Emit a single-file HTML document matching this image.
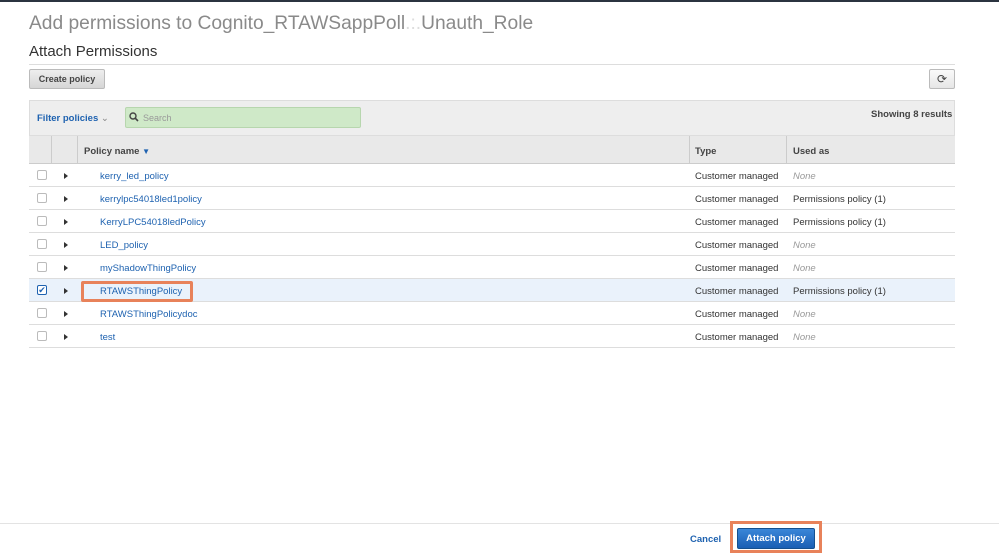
<!DOCTYPE html>
<html><head><style>
*{margin:0;padding:0;box-sizing:border-box}
body{width:999px;height:551px;background:#fff;font-family:"Liberation Sans",sans-serif;position:relative;overflow:hidden;color:#333}
.a{position:absolute}
.row{position:absolute;left:29px;width:926px;height:23px;border-bottom:1px solid #ddd;font-size:9.5px}
.row span{position:absolute;top:7px}
.cb{position:absolute;left:8px;top:6px;width:10px;height:10px;border:1px solid #bbb;border-radius:2px;background:#fff}
.tri{position:absolute;left:35px;top:9px;width:0;height:0;border-left:4px solid #333;border-top:3px solid transparent;border-bottom:3px solid transparent}
.nm{left:71px;color:#1e62b0}
.ty{left:666px}
.us{left:764px}
.none{color:#999;font-style:italic}
</style></head><body>
<div class="a" style="left:0;top:0;width:999px;height:2px;background:#2b3440"></div>
<div class="a" style="left:29px;top:13px;font-size:19.2px;color:#8a8a8a;white-space:nowrap">Add permissions to Cognito_RTAWSappPoll<span style="color:#ddd">.:.</span>Unauth_Role</div>
<div class="a" style="left:29px;top:43px;font-size:15px;color:#333">Attach Permissions</div>
<div class="a" style="left:29px;top:64px;width:926px;height:1px;background:#ddd"></div>
<div class="a" style="left:29px;top:69px;width:76px;height:20px;background:linear-gradient(#eee,#d6d6d6);border:1px solid #bbb;border-radius:2px;font-size:9px;font-weight:bold;text-align:center;line-height:18px;color:#444">Create policy</div>
<div class="a" style="left:929px;top:69px;width:26px;height:20px;background:linear-gradient(#fafafa,#e6e6e6);border:1px solid #bbb;border-radius:2px;font-size:12px;text-align:center;line-height:18px;color:#444">⟳</div>
<div class="a" style="left:29px;top:100px;width:926px;height:36px;background:#eee;border:1px solid #ddd"></div>
<div class="a" style="left:37px;top:113px;font-size:9.5px;font-weight:bold;color:#1e62b0">Filter policies <span style="font-weight:normal;color:#888">⌄</span></div>
<div class="a" style="left:125px;top:107px;width:236px;height:21px;background:#cfe9c8;border:1px solid #b7d6ae;border-radius:2px"></div>
<svg class="a" style="left:129px;top:112px" width="10" height="10" viewBox="0 0 10 10"><circle cx="4" cy="4" r="3" fill="none" stroke="#444" stroke-width="1.4"/><path d="M6.2 6.2L9 9" stroke="#444" stroke-width="1.6"/></svg>
<div class="a" style="left:143px;top:113px;font-size:9px;color:#999">Search</div>
<div class="a" style="left:871px;top:109px;font-size:9.5px;font-weight:bold;color:#444">Showing 8 results</div>
<div class="a" style="left:29px;top:136px;width:926px;height:28px;background:#e9e9e9;border-bottom:1px solid #ccc"></div>
<div class="a" style="left:51px;top:136px;width:1px;height:28px;background:#ccc"></div>
<div class="a" style="left:77px;top:136px;width:1px;height:28px;background:#ccc"></div>
<div class="a" style="left:689px;top:136px;width:1px;height:28px;background:#ccc"></div>
<div class="a" style="left:786px;top:136px;width:1px;height:28px;background:#ccc"></div>
<div class="a" style="left:84px;top:146px;font-size:9.5px;font-weight:bold;color:#444">Policy name <span style="color:#1e62b0;font-size:8px">▼</span></div>
<div class="a" style="left:695px;top:146px;font-size:9.5px;font-weight:bold;color:#444">Type</div>
<div class="a" style="left:793px;top:146px;font-size:9.5px;font-weight:bold;color:#444">Used as</div>

<div class="row" style="top:164px"><div class="cb"></div><div class="tri"></div><span class="nm">kerry_led_policy</span><span class="ty">Customer managed</span><span class="us none">None</span></div>
<div class="row" style="top:187px"><div class="cb"></div><div class="tri"></div><span class="nm">kerrylpc54018led1policy</span><span class="ty">Customer managed</span><span class="us">Permissions policy (1)</span></div>
<div class="row" style="top:210px"><div class="cb"></div><div class="tri"></div><span class="nm">KerryLPC54018ledPolicy</span><span class="ty">Customer managed</span><span class="us">Permissions policy (1)</span></div>
<div class="row" style="top:233px"><div class="cb"></div><div class="tri"></div><span class="nm">LED_policy</span><span class="ty">Customer managed</span><span class="us none">None</span></div>
<div class="row" style="top:256px"><div class="cb"></div><div class="tri"></div><span class="nm">myShadowThingPolicy</span><span class="ty">Customer managed</span><span class="us none">None</span></div>
<div class="row" style="top:279px;background:#eaf2fb"><div class="cb" style="border-color:#1e62b0;color:#1e62b0;font-size:9px;line-height:8px;text-align:center">✔</div><div class="tri"></div><span class="nm">RTAWSThingPolicy</span><span class="ty">Customer managed</span><span class="us">Permissions policy (1)</span></div>
<div class="row" style="top:302px"><div class="cb"></div><div class="tri"></div><span class="nm">RTAWSThingPolicydoc</span><span class="ty">Customer managed</span><span class="us none">None</span></div>
<div class="row" style="top:325px"><div class="cb"></div><div class="tri"></div><span class="nm">test</span><span class="ty">Customer managed</span><span class="us none">None</span></div>
<div class="a" style="left:81px;top:281px;width:112px;height:21px;border:3px solid #e8825a;border-radius:2px"></div>

<div class="a" style="left:0;top:523px;width:999px;height:1px;background:#e3e3e3"></div>
<div class="a" style="left:690px;top:534px;font-size:9.5px;font-weight:bold;color:#1e62b0">Cancel</div>
<div class="a" style="left:730px;top:521px;width:92px;height:32px;border:3px solid #e8825a"></div>
<div class="a" style="left:737px;top:528px;width:78px;height:21px;background:linear-gradient(#3a86d8,#1a5fb4);border:1px solid #15508f;border-radius:2px;color:#fff;font-size:9.5px;font-weight:bold;text-align:center;line-height:19px">Attach policy</div>
</body></html>
